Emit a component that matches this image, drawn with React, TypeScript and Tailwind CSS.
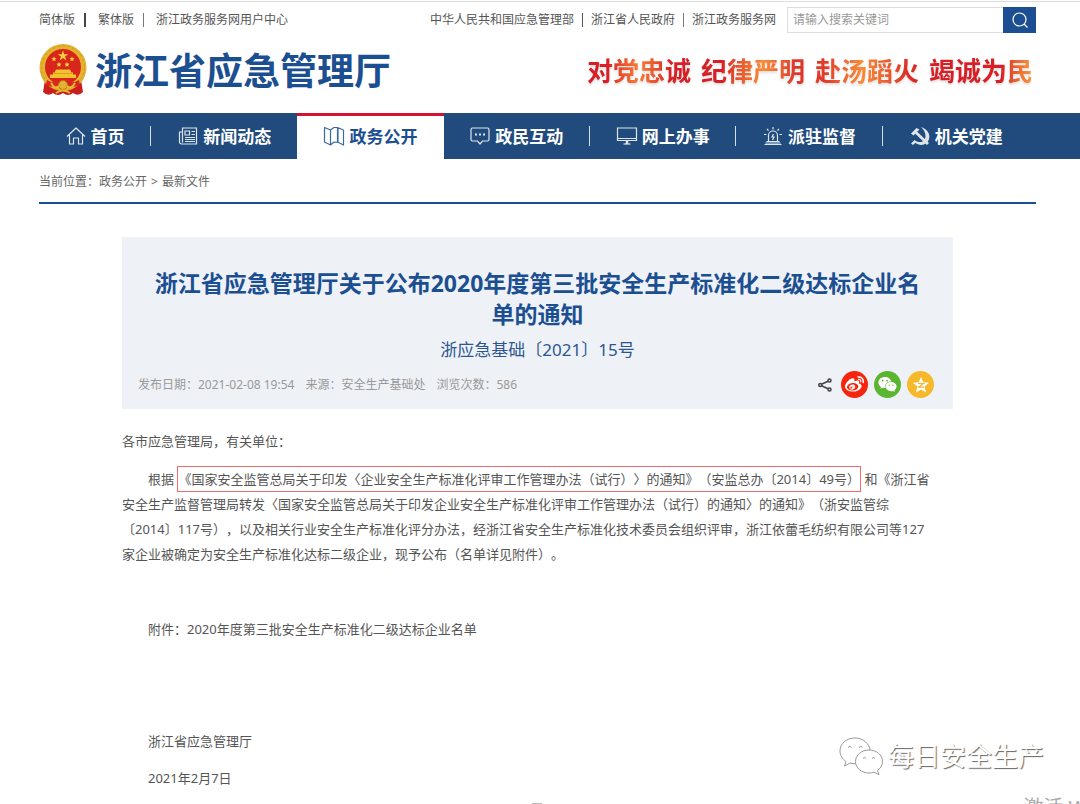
import type { ReactNode } from 'react';
import { FaWeibo, FaWeixin } from 'react-icons/fa';

function Emblem() {
  return (
    <svg className="h-[54px] w-12 shrink-0" viewBox="0 0 48 54" aria-label="国徽">
      <path d="M6 36 L4 48 Q9 53 14 49 Q19 53 24 49 Q29 53 34 49 Q39 53 44 48 L42 36 Z" fill="#c9201f" />
      <circle cx="24" cy="23.5" r="23.5" fill="#e3b32f" />
      <circle cx="24" cy="23.5" r="21.5" fill="none" stroke="#d29c22" strokeWidth="1" strokeDasharray="3 2" />
      <circle cx="24" cy="23" r="18" fill="#d8261d" />
      <path d="M24 6.500l1.300 3.700h4l-3.200 2.400 1.200 3.800-3.300-2.300-3.300 2.300 1.200-3.800-3.200-2.400h4z" fill="#f6cf3a" />
      <path d="M15 12.500l.7 1.600 1.800.2-1.300 1.200.3 1.800-1.500-.9-1.600.9.4-1.800-1.300-1.200 1.700-.2zM33 12.500l.7 1.600 1.800.2-1.300 1.200.3 1.800-1.500-.9-1.600.9.4-1.800-1.300-1.200 1.700-.2zM20 18l.7 1.600 1.800.2-1.300 1.200.3 1.800-1.500-.9-1.600.9.4-1.800-1.300-1.200 1.700-.2zM28 18l.7 1.600 1.800.2-1.300 1.200.3 1.800-1.500-.9-1.600.9.4-1.800-1.300-1.200 1.700-.2z" fill="#f6cf3a" />
      <path d="M17 25.500h14l1.500 3H34v2h3v3.500H11v-3.500h3v-2h1.500z" fill="#f2c22f" />
      <path d="M15 29.500h18" stroke="#d8a01c" />
      <path d="M8 36 Q16 41 24 36 Q32 41 40 36 L41 41 Q32 45 24 41 Q16 45 7 41 Z" fill="#d8261d" />
      <circle cx="24" cy="41" r="4.500" fill="#e3b32f" stroke="#b8791a" />
      <path d="M12 39 Q16 46 20 42 M36 39 Q32 46 28 42 M17 49 Q24 44 31 49" fill="none" stroke="#eab933" strokeWidth="2" />
    </svg>
  );
}

function NavIcon({ children }: { children: ReactNode }) {
  return (
    <svg className="h-5 w-[22px] shrink-0 opacity-85" viewBox="0 0 22 20" fill="none" stroke="currentColor" strokeWidth="1.2" aria-hidden="true">
      {children}
    </svg>
  );
}

const HomeIcon = () => (
  <NavIcon>
    <path d="M2 10.500L11 2l9 8.500M4.500 9v9h4v-6h5v6h4V9" strokeLinejoin="round" />
  </NavIcon>
);

const NewsIcon = () => (
  <NavIcon>
    <path d="M5.500 2h14v16h-15a2 2 0 0 1-2-2V6h3zM5.500 6v10.500" />
    <path d="M8 5h4.500v4H8zM14.500 5.500H18M14.500 8.500H18M8 11.500h10M8 13.500h10M8 15.500h10" />
  </NavIcon>
);

const MapIcon = () => (
  <NavIcon>
    <path d="M1.500 1.500L7.500 4v15L1.500 16zM7.500 4L11 1.500h3L15 2v14.500L11 16l-3.500 3M15 2l0 0M14.500 1.500v14.500M14.500 1.500L20.500 4M14.500 16l6 3V4" strokeLinejoin="round" />
  </NavIcon>
);

const ChatIcon = () => (
  <NavIcon>
    <path d="M3.500 2h15A1.500 1.500 0 0 1 20 3.500v10a1.500 1.500 0 0 1-1.500 1.500h-5L11 18l-2.500-3h-5A1.500 1.500 0 0 1 2 13.500v-10A1.500 1.500 0 0 1 3.500 2z" />
    <path d="M6 8.500h2M10 8.500h2M14 8.500h2" strokeWidth="2" />
  </NavIcon>
);

const ScreenIcon = () => (
  <NavIcon>
    <path d="M1.500 2h19v12.500h-19zM1.500 12.500h19" />
    <path d="M11 14.500V18" strokeWidth="2.500" />
    <path d="M7.500 18h7" />
  </NavIcon>
);

const AlarmIcon = () => (
  <NavIcon>
    <path d="M6.500 15V9.500a4.500 4.500 0 0 1 9 0V15M4.500 15.500h13M2.500 18.500h17M3.500 17h15M11 1v2.500M5 3l1.500 1.500M17 3l-1.500 1.500M2 8.500h2.500M17.500 8.500H20" />
    <path d="M11.500 8l-1.500 3h2l-1.500 3" />
  </NavIcon>
);

const PartyIcon = () => (
  <NavIcon>
    <path d="M12 1c8 2.500 10.500 10 6.500 15-3.500 4-9 3.500-12 .8L4 19l-2-1.500L5.500 14c3 2.500 7 2.800 9.300.5C18 11 16.500 5 12 1z" fill="currentColor" stroke="none" />
    <path d="M2 7.500L7.500 2l3 1.500-2.300 2.300L20 17l-2 2L6.300 7.700 4.500 9.500z" fill="currentColor" stroke="none" />
  </NavIcon>
);

const NAV = [
  { label: '首页', icon: <HomeIcon /> },
  { label: '新闻动态', icon: <NewsIcon /> },
  { label: '政务公开', icon: <MapIcon />, active: true },
  { label: '政民互动', icon: <ChatIcon /> },
  { label: '网上办事', icon: <ScreenIcon /> },
  { label: '派驻监督', icon: <AlarmIcon /> },
  { label: '机关党建', icon: <PartyIcon /> },
];

// items followed by a thin divider
const DIVIDED = ['首页', '政民互动', '网上办事', '派驻监督'];

function TopBar() {
  return (
    <div className="flex h-[26px] items-center text-xs text-[#555]">
      <a href="#" className="border-r-2 border-[#444] pr-[9px] leading-[14px]">简体版</a>
      <a href="#" className="border-r border-[#777] pr-[9px] pl-3 leading-[14px]">繁体版</a>
      <a href="#" className="pl-3 leading-[14px]">浙江政务服务网用户中心</a>
      <div className="ml-auto flex items-center">
        <a href="#" className="border-r border-[#555] pr-2 leading-[14px]">中华人民共和国应急管理部</a>
        <a href="#" className="border-r border-[#777] px-2 leading-[14px]">浙江省人民政府</a>
        <a href="#" className="pl-2 leading-[14px]">浙江政务服务网</a>
        <form className="ml-[11px] flex h-[26px]" onSubmit={(e) => e.preventDefault()}>
          <input
            type="text"
            aria-label="搜索"
            placeholder="请输入搜索关键词"
            className="w-[216px] border border-r-0 border-[#ddd] px-[5px] text-xs outline-none placeholder:text-[#999]"
          />
          <button type="submit" aria-label="搜索" className="flex w-[33px] items-center justify-center bg-[#1c4f91] text-white">
            <svg className="size-[18px]" viewBox="0 0 18 18" fill="none" stroke="currentColor" strokeWidth="1.2">
              <circle cx="8.500" cy="8.500" r="6.500" />
              <path d="M13 13l3.500 3.500" />
            </svg>
          </button>
        </form>
      </div>
    </div>
  );
}

function Slogan() {
  return (
    <p className="flex gap-[10px] text-[26px] leading-9 font-bold drop-shadow-[0_2px_1px_rgba(0,0,0,0.12)]">
      <span className="bg-linear-to-r from-[#d91f26] from-20% via-[#fb7a35] via-50% to-[#d91f26] to-80% bg-clip-text text-transparent">对党忠诚</span>
      <span className="bg-linear-to-r from-[#d91f26] from-20% via-[#fb8a35] via-60% to-[#e0352a] to-90% bg-clip-text text-transparent">纪律严明</span>
      <span className="bg-linear-to-r from-[#e23a2a] from-10% via-[#fb8a35] via-45% to-[#dc2a26] to-90% bg-clip-text text-transparent">赴汤蹈火</span>
      <span className="bg-linear-to-r from-[#d91f26] from-70% to-[#fb9a3a] bg-clip-text text-transparent">竭诚为民</span>
    </p>
  );
}

function NavBar() {
  return (
    <nav className="flex h-[46px] bg-[#224b7d] pr-[51px] pl-[39px]">
      {NAV.map((item) => (
        <a
          key={item.label}
          href="#"
          className={`flex items-center ${item.label === '首页' ? 'w-[112px]' : 'flex-1'} ${
            item.active ? 'border-t-[3px] border-[#d3122f] bg-white pb-[3px] text-[#1c4f91]' : 'text-white'
          }`}
        >
          <span className="flex flex-1 items-center justify-center gap-1">
            {item.icon}
            <span className="pt-0.5 text-[17px] leading-6 font-bold">{item.label}</span>
          </span>
          {DIVIDED.includes(item.label) && <span className="h-5 w-px bg-[#d5deea]" />}
        </a>
      ))}
    </nav>
  );
}

function ShareLinks() {
  return (
    <div className="flex items-center gap-1.5">
      <button type="button" aria-label="分享" className="pr-[3px] text-[#444]">
        <svg className="size-[14px]" viewBox="0 0 14 14" fill="none" stroke="currentColor" strokeWidth="1.500">
          <path d="M3.500 6.200l6.500-3M3.500 7.800l6.500 3" />
          <circle cx="2.200" cy="7" r="1.500" />
          <circle cx="11.500" cy="2.500" r="1.500" />
          <circle cx="11.500" cy="11.500" r="1.500" />
        </svg>
      </button>
      <a href="#" aria-label="微博" className="flex size-[27px] items-center justify-center rounded-full bg-[#f5260d] text-white">
        <FaWeibo size={19} />
      </a>
      <a href="#" aria-label="微信" className="flex size-[27px] items-center justify-center rounded-full bg-[#5cb531] text-white">
        <FaWeixin size={19} />
      </a>
      <a href="#" aria-label="QQ空间" className="flex size-[27px] items-center justify-center rounded-full bg-[#f6b92c] text-white">
        <svg className="size-[18px]" viewBox="0 0 18 18">
          <path d="M9 1l2.300 5.300 5.700.5-4.300 3.800L14 16.500 9 13.500l-5 3 1.300-5.900L1 6.800l5.700-.5z" fill="currentColor" />
          <path d="M6 7.500h5.500L6.500 11.200h6" fill="none" stroke="#f6b92c" strokeWidth="1.200" />
        </svg>
      </a>
    </div>
  );
}

function Article() {
  return (
    <article className="mx-[83px] mt-[33px]">
      <header className="bg-[#eef2f7] px-4 pt-[31px] pb-[11px]">
        <h1 className="text-center text-[23px] leading-[31px] font-bold text-[#1c4f91]">
          浙江省应急管理厅关于公布2020年度第三批安全生产标准化二级达标企业名
          <br />
          单的通知
        </h1>
        <p className="mt-2 text-center text-[17px] leading-6 text-[#2d5592]">浙应急基础〔2021〕15号</p>
        <div className="mt-[9px] flex items-center justify-between pr-[3px]">
          <p className="flex gap-[11px] text-xs text-[#999]">
            <span>发布日期：2021-02-08 19:54</span>
            <span>来源：安全生产基础处</span>
            <span>浏览次数：586</span>
          </p>
          <ShareLinks />
        </div>
      </header>

      <div className="mt-5 text-[13px] leading-[25px] whitespace-nowrap text-[#555]">
        <p>各市应急管理局，有关单位：</p>
        <p className="mt-[13px] indent-[26px]">
          根据{' '}
          <span className="border border-[#f56a6a] py-[3px]">
            《国家安全监管总局关于印发〈企业安全生产标准化评审工作管理办法（试行）〉的通知》（安监总办〔2014〕49号）
          </span>{' '}
          和《浙江省
          <br />
          安全生产监督管理局转发〈国家安全监管总局关于印发企业安全生产标准化评审工作管理办法（试行）的通知〉的通知》（浙安监管综
          <br />
          〔2014〕117号），以及相关行业安全生产标准化评分办法，经浙江省安全生产标准化技术委员会组织评审，浙江依蕾毛纺织有限公司等127
          <br />
          家企业被确定为安全生产标准化达标二级企业，现予公布（名单详见附件）。
        </p>
        <p className="mt-[50px] indent-[26px]">附件：2020年度第三批安全生产标准化二级达标企业名单</p>
        <p className="mt-[87px] indent-[26px]">浙江省应急管理厅</p>
        <p className="mt-3 indent-[26px]">2021年2月7日</p>
      </div>
    </article>
  );
}

function Watermark() {
  return (
    <div className="absolute right-[36px] bottom-[29px] flex items-center gap-[5px]">
      <svg className="h-[38px] w-11" viewBox="0 0 44 38" fill="#fff" stroke="#999" strokeWidth="1" aria-hidden="true">
        <path d="M16 1C7.500 1 1 6.500 1 14c0 4.500 2.500 8 6 10.500L5.500 29l5.500-3c2 .6 4 .8 6 .8 8 0 14-5.500 14-12.800S24 1 16 1z" />
        <path d="M30 13c-7.500 0-13.500 5-13.500 11.500S22.500 36 30 36c1.800 0 3.300-.3 5-.8l5 2.500-1.500-4.200c3-2.200 5-5.200 5-9C43.500 18 37.500 13 30 13z" />
        <path d="M9 10.500q1.800-2.500 3.500 0M20 10.500q1.800-2.500 3.500 0M24 21.500q1.500-2.200 3 0M33 21.500q1.500-2.200 3 0" fill="none" />
      </svg>
      <span className="text-[26px] leading-9 text-white [text-shadow:1px_1px_1px_#666]">每日安全生产</span>
    </div>
  );
}

export default function App() {
  return (
    <div className="relative min-h-screen overflow-hidden bg-white font-['Noto_Sans','Noto_Sans_CJK_SC',sans-serif] [text-spacing-trim:space-all]">
      <header className="mt-px border-t border-[#ddd] pt-[5px]">
        <div className="pr-[44px] pl-[39px]">
          <TopBar />
          <div className="mb-1 flex h-[76px] items-center gap-2">
            <Emblem />
            <h2 className="text-[37px] leading-[48px] font-bold text-[#1c4f91]">浙江省应急管理厅</h2>
            <div className="mr-[3px] ml-auto">
              <Slogan />
            </div>
          </div>
        </div>
        <NavBar />
      </header>

      <main className="pr-[44px] pl-[39px]">
        <div className="flex h-[45px] items-center gap-1 border-b-2 border-[#1c4f91] pt-0.5 text-xs text-[#666]">
          <span>当前位置：<a href="#">政务公开</a></span>
          <span>&gt;</span>
          <a href="#">最新文件</a>
        </div>
        <Article />
      </main>

      <Watermark />
      <div className="absolute -right-[74px] -bottom-[18px] text-xl leading-7 whitespace-nowrap text-[#aaa]">激活 Windows</div>
      <div className="absolute bottom-0 left-[532px] h-px w-2.5 bg-[#bbb]" />
    </div>
  );
}
